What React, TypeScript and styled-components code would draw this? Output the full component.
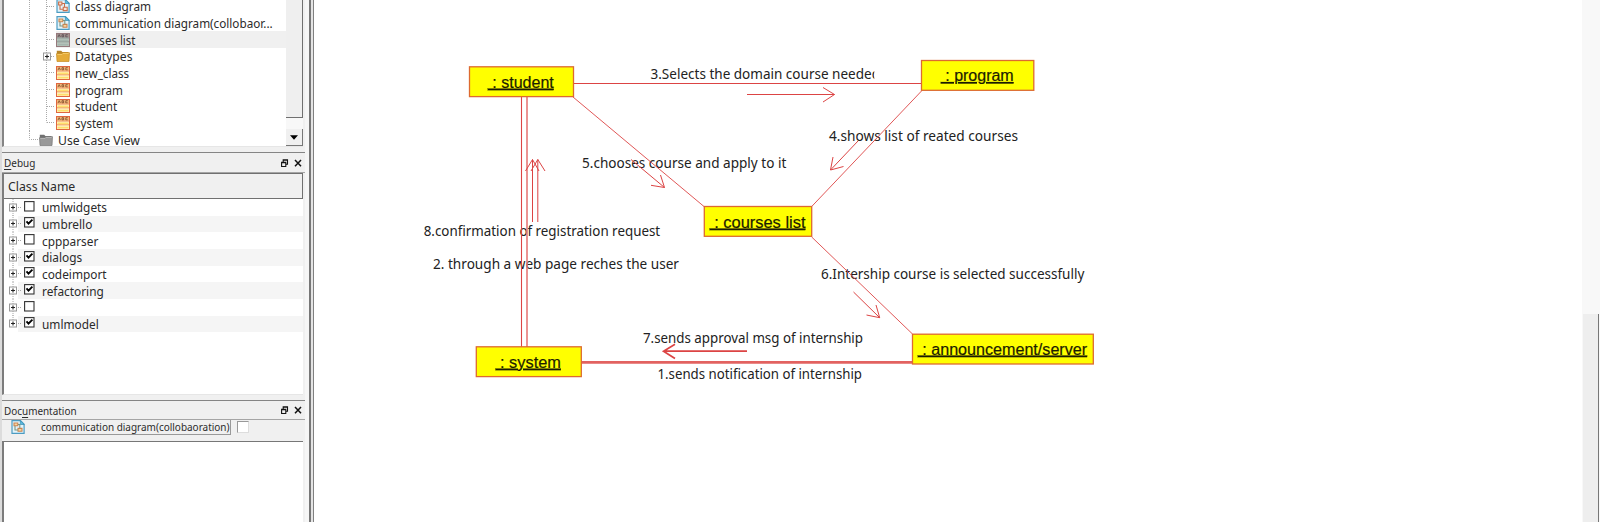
import React from "react";
import styled, { createGlobalStyle, css } from "styled-components";

const GlobalStyle = createGlobalStyle`
  * { box-sizing: border-box; }
  body { margin: 0; background: #fff; font-family: "Noto Sans", "Open Sans", sans-serif; color: #2b2b2b; overflow: hidden; }
`;

const Window = styled.div`
  display: flex;
  width: 1600px;
  height: 522px;
  overflow: hidden;
  background: #fff;
`;

const Sidebar = styled.aside`
  display: flex;
  flex-direction: column;
  width: 305px;
  height: 522px;
  flex: none;
  border-left: 2px solid #dcdcdc;
  background: #f0f0f0;
`;

const Splitter = styled.div`
  width: 10px;
  flex: none;
  background: linear-gradient(90deg, #f6f6f6 0 4px, #777 4px 6px, #e4e4e4 6px 8px, #808080 8px 9px, #fff 9px);
`;

const TreePane = styled.section`
  display: flex;
  height: 147px;
  flex: none;
  margin: 0 2px 0 0;
  border-left: 2px solid #858585;
  border-bottom: 1px solid #e6e6e6;
  background: #fff;
  overflow: hidden;
`;

const TreeRows = styled.div`
  flex: 1;
  margin-top: -2px;
  min-width: 0;
`;

const TreeRow = styled.div<{ $selected?: boolean; $level: number }>`
  display: flex;
  align-items: center;
  height: 16.67px;
  padding-left: ${(p) => (p.$level === 1 ? 25 : 37)}px;
  background: ${(p) => (p.$selected ? "linear-gradient(90deg, #fff 52px, #f0f0f0 52px)" : "none")};
`;

const NarrowText = styled.span<{ $scale?: number }>`
  display: inline-block;
  transform: scaleX(${(p) => p.$scale ?? 0.87});
  transform-origin: left center;
  white-space: pre;
`;

const TreeLabel = styled(NarrowText)`
  font-size: 13.4px;
  line-height: 16px;
`;

const BranchSvg = styled.svg`
  flex: none;
  display: block;
`;

const IconSvg = styled.svg`
  flex: none;
  display: block;
  margin-right: 5px;
`;

const ScrollColumn = styled.div`
  display: flex;
  flex-direction: column;
  width: 17px;
  flex: none;
  background: #f8f8f8;
`;

const ScrollThumb = styled.div`
  height: 118px;
  border-right: 1px solid #707070;
  border-bottom: 1px solid #707070;
  background: #efefef;
`;

const ScrollButton = styled.div`
  display: flex;
  align-items: center;
  justify-content: center;
  height: 17px;
  margin-top: 11px;
  border-right: 1px solid #777;
  border-bottom: 1px solid #777;
  background: #f0f0f0;
`;

const DockTitle = styled.header<{ $h: number }>`
  display: flex;
  align-items: center;
  justify-content: space-between;
  height: ${(p) => p.$h}px;
  flex: none;
  margin-top: 5px;
  padding: 1px 3px 0 2px;
  border-top: 1.5px solid #858585;
  border-bottom: 1px solid #a5a5a5;
  font-size: 11.6px;
  line-height: 16px;
`;

const Mnemonic = styled.span`
  text-decoration: underline;
  text-underline-offset: 1.5px;
`;

const DebugList = styled.section`
  display: flex;
  flex-direction: column;
  height: 222px;
  flex: none;
  margin: 0 2px 0 0;
  border-left: 2px solid #7c7c7c;
  border-bottom: 1px solid #e6e6e6;
  background: #fff;
`;

const ColumnHeader = styled.div`
  display: flex;
  align-items: center;
  height: 26px;
  flex: none;
  padding-left: 4px;
  border: 1px solid #707070;
  border-left: 0;
  background: #f0f0f0;
  font-size: 13.4px;
`;

const DebugRow = styled.div<{ $alt: boolean }>`
  display: flex;
  align-items: center;
  height: 16.67px;
  flex: none;
  padding-left: 5px;
  background: ${(p) => (p.$alt ? "linear-gradient(90deg, #fff 14px, #f5f5f5 14px)" : "none")};
`;

const CheckSvg = styled.svg`
  flex: none;
  margin: -2px 7px 0 2px;
`;

const DocBar = styled.div`
  display: flex;
  align-items: flex-start;
  height: 21px;
  flex: none;
  padding-left: 9px;
`;

const DocName = styled.div`
  height: 15px;
  width: 191px;
  flex: none;
  margin-left: 10px;
  padding-left: 1px;
  border-right: 1px solid #999;
  border-bottom: 1px solid #999;
  font-size: 11.4px;
  line-height: 14px;
  white-space: nowrap;
`;

const DocCheck = styled.div`
  width: 12px;
  height: 12px;
  margin: 1px 0 0 6px;
  border: 1px solid #999;
  border-right-color: #ddd;
  border-bottom-color: #ddd;
  background: #fff;
`;

const DocText = styled.div`
  flex: 1;
  margin-right: 2px;
  border-top: 1.5px solid #777;
  border-left: 2px solid #7c7c7c;
  background: #fff;
`;

const Canvas = styled.main`
  flex: 1;
  min-width: 0;
`;

const DiagramSvg = styled.svg`
  display: block;
`;

const Edge = styled.path<{ $tone?: string; $w?: number }>`
  fill: none;
  stroke: ${(p) => p.$tone ?? "#dc4444"};
  stroke-width: ${(p) => p.$w ?? 1};
`;

const NodeRect = styled.rect`
  fill: #ffff00;
  stroke: #dd6a30;
  stroke-width: 1.3;
`;

const nodeFont = css`
  font-family: "Liberation Sans", Arial, sans-serif;
  font-size: 16px;
`;

const NodeText = styled.text`
  ${nodeFont}
  fill: #1c1c00;
  stroke: #1c1c00;
  stroke-width: 0.2;
`;

const MessageText = styled.text`
  font-size: 13.5px;
  fill: #222;
`;

const CanvasScroll = styled.div`
  display: flex;
  flex-direction: column;
  width: 18px;
  flex: none;
  background: #f8f8f8;
`;

const CanvasThumb = styled.div`
  flex: 1;
  margin: 314px 1px 0 1px;
  border-right: 1px solid #777;
  background: #eee;
`;

type IconKind = "diagram" | "collab" | "class" | "classGrey" | "folder" | "folderGrey";

function TreeIcon({ kind }: { kind: IconKind }) {
  if (kind === "diagram" || kind === "collab") {
    return (
      <IconSvg width="14" height="14" viewBox="0 0 14 14">
        <path d="M1 .7h8.5l3.6 3.6v9H1z" fill="#e3f4fb" stroke="#4c9cc2" strokeWidth="1.2" />
        <path d="M9.3.6v3.9h3.9z" fill="#5ebbe0" stroke="#368eb3" strokeWidth=".7" />
        {kind === "diagram" ? (
          <g fill="#fbe3d5" stroke="#cb6f4c" strokeWidth="1.1">
            <path d="M2.6 3h3.3v3H2.6zM7.2 8.3h4v3.3h-4z" />
            <path d="M4 6v4.2h3.2M6 4.5h2.5v3.8" fill="none" />
          </g>
        ) : (
          <g fill="#f4d5a1" stroke="#cc8450" strokeWidth="1.1">
            <path d="M3 3h3.8v2.8H3zM7 8.4h4v2.9H7z" />
            <path d="M4 6v4h3M7 4.5h1.8v3.8" fill="none" stroke="#7d9480" />
          </g>
        )}
      </IconSvg>
    );
  }
  if (kind === "folder" || kind === "folderGrey") {
    const gold = kind === "folder";
    return (
      <IconSvg width="14" height="14" viewBox="0 0 14 14">
        <path d="M.8 3V1.8h4.4l1.2 1.3h6v3H.8z" fill={gold ? "#b9872b" : "#707070"} />
        <path d="M.5 4.7h5.2l1-1h6.8l-.5 8.8H1z" fill={gold ? "#e5ab38" : "#999"} stroke={gold ? "#c58c24" : "#777"} strokeWidth=".7" />
        <path d="M1.3 5.5H6l1-1h5.7" fill="none" stroke={gold ? "#f7cf70" : "#bbb"} strokeWidth=".8" />
      </IconSvg>
    );
  }
  const grey = kind === "classGrey";
  return (
    <IconSvg width="14" height="14" viewBox="0 0 14 14">
      <rect x=".5" y=".5" width="13" height="13" fill={grey ? "#b9c6bd" : "#fff3c4"} stroke={grey ? "#96797c" : "#e0673f"} strokeWidth="1" />
      <rect x="1" y="1" width="12" height="3.6" fill={grey ? "#a39390" : "#f0b878"} />
      <path d="M2 4l1.2-2.4L4.4 4M6 3.9V1.7h1.6v2.2zM11.8 1.7H9.8v2.2h2" fill="none" stroke={grey ? "#554b50" : "#7c4628"} strokeWidth=".8" />
      <path d="M1 5h12M1 8.8h12" stroke={grey ? "#87908c" : "#e8824e"} strokeWidth=".9" />
      <path d="M1.5 7.4h11M1.5 11.6h11" stroke={grey ? "#a5b5ae" : "#ffdf6c"} strokeWidth="1.6" />
    </IconSvg>
  );
}

interface TreeItem {
  label: string;
  icon: IconKind;
  selected?: boolean;
  expandable?: boolean;
  last?: boolean;
  scale?: number;
}

const treeItems: TreeItem[] = [
  { label: "class diagram", icon: "diagram", scale: 0.88 },
  { label: "communication diagram(collobaor...", icon: "collab", scale: 0.875 },
  { label: "courses list", icon: "classGrey", selected: true, scale: 0.86 },
  { label: "Datatypes", icon: "folder", expandable: true, scale: 0.905 },
  { label: "new_class", icon: "class" },
  { label: "program", icon: "class" },
  { label: "student", icon: "class" },
  { label: "system", icon: "class", last: true, scale: 0.86 },
];

function PlusBox() {
  return (
    <>
      <rect x="2.5" y="5" width="7" height="7" fill="#fff" stroke="#999" />
      <path d="M4 8.5h4M6 6.5v4" stroke="#222" strokeWidth="1.1" />
    </>
  );
}

function ModelTree() {
  return (
    <TreePane>
      <TreeRows>
        {treeItems.map((item) => (
          <TreeRow key={item.label} $level={2} $selected={item.selected}>
            <BranchSvg width="15" height="17" viewBox="0 0 15 17" overflow="visible">
              <path d={`M-11.5 0v17M5.5 0v${item.last ? 8.5 : 17}M6 8.5h7`} stroke="#aaa" strokeDasharray="1 1" fill="none" />
              {item.expandable && <PlusBox />}
            </BranchSvg>
            <TreeIcon kind={item.icon} />
            <TreeLabel $scale={item.scale}>{item.label}</TreeLabel>
          </TreeRow>
        ))}
        <TreeRow $level={1}>
          <BranchSvg width="10" height="17" viewBox="0 0 10 17">
            <path d="M.5 0v8.5h9" stroke="#aaa" strokeDasharray="1 1" fill="none" />
          </BranchSvg>
          <TreeIcon kind="folderGrey" />
          <TreeLabel $scale={0.91}>Use Case View</TreeLabel>
        </TreeRow>
      </TreeRows>
      <ScrollColumn>
        <ScrollThumb />
        <ScrollButton>
          <svg width="8" height="5" viewBox="0 0 8 5"><path d="M0 .3h8L4 4.7z" fill="#000" /></svg>
        </ScrollButton>
      </ScrollColumn>
    </TreePane>
  );
}

function DockButtons() {
  return (
    <svg width="21" height="9" viewBox="0 0 21 9">
      <path d="M2.2 3V.8h4.3v4.4H5M2 1.2h4.6M.6 3.3h4.2v4.2H.6zM.5 3.8h4.3" fill="none" stroke="#111" strokeWidth="1.1" />
      <path d="M14 1l6 6.3M20 1l-6 6.3" stroke="#111" strokeWidth="1.5" />
    </svg>
  );
}

const debugItems: [string, boolean][] = [
  ["umlwidgets", false],
  ["umbrello", true],
  ["cppparser", false],
  ["dialogs", true],
  ["codeimport", true],
  ["refactoring", true],
  ["", false],
  ["umlmodel", true],
];

function DebugPanel() {
  return (
    <DebugList>
      <ColumnHeader>
        <NarrowText $scale={0.915}>Class Name</NarrowText>
      </ColumnHeader>
      {debugItems.map(([name, checked], i) => (
        <DebugRow key={i} $alt={i % 2 === 1}>
          <BranchSvg width="13" height="17" viewBox="2 0 13 17">
            <path d={`M6 0v${i === 7 ? 8.5 : 17}M9 8.5h6`} stroke="#aaa" strokeDasharray="1 1" />
            <PlusBox />
          </BranchSvg>
          <CheckSvg width="11" height="11" viewBox="0 0 11 11">
            <rect x=".6" y=".6" width="9.4" height="9.4" fill="#fff" stroke="#333" strokeWidth="1.1" />
            {checked && <path d="M2.5 4.4l2 2.2L8.4 2.7" fill="none" stroke="#000" strokeWidth="1.9" />}
          </CheckSvg>
          <TreeLabel $scale={0.885}>{name}</TreeLabel>
        </DebugRow>
      ))}
    </DebugList>
  );
}

const nodes = [
  { x: 469.5, y: 66.8, w: 104, label: "student", tx: 487.8, tw: 66, ty: 87.6 },
  { x: 921.5, y: 60.5, w: 112.3, label: "program", tx: 940.8, tw: 72.9, ty: 81 },
  { x: 704.3, y: 206.5, w: 107.4, label: "courses list", tx: 709.6, tw: 95.9, ty: 227.5 },
  { x: 912.5, y: 334.2, w: 180.8, label: "announcement/server", tx: 917.8, tw: 169.3, ty: 354.5 },
  { x: 476.3, y: 346.8, w: 105, label: "system", tx: 495.5, tw: 65.4, ty: 367.6 },
];

const messages = [
  { x: 650.5, y: 79, w: 229.5, text: "3.Selects the domain course needed", clip: true },
  { x: 582, y: 168, w: 204.3, text: "5.chooses course and apply to it" },
  { x: 423.7, y: 236, w: 236.5, text: "8.confirmation of registration request" },
  { x: 433, y: 268.7, w: 246, text: "2. through a web page reches the user" },
  { x: 829, y: 141, w: 189, text: "4.shows list of reated courses" },
  { x: 821, y: 279, w: 263.3, text: "6.Intership course is selected successfully" },
  { x: 643, y: 343, w: 220, text: "7.sends approval msg of internship" },
  { x: 657.5, y: 379, w: 204.5, text: "1.sends notification of internship" },
];

function Diagram() {
  return (
    <DiagramSvg width="1267" height="522" viewBox="315 0 1267 522">
      <clipPath id="labelClip"><rect x="640" y="60" width="234.3" height="30" /></clipPath>
      {messages.map((m) => (
        <MessageText
          key={m.text}
          x={m.x}
          y={m.y}
          textLength={m.w}
          lengthAdjust="spacingAndGlyphs"
          clipPath={m.clip ? "url(#labelClip)" : undefined}
        >
          {m.text}
        </MessageText>
      ))}
      <Edge d="M573 83.5H921.5" $w={1.2} />
      <Edge d="M747 94.5H834.5M823 87.5L834.5 94.5L823 102" />
      <Edge d="M573 97L704 206.5M921.5 91L811.7 206.5M811.7 237L912.5 334" $w={0.9} />
      <Edge d="M631 159.5L664.5 187.5M660.5 175L664.5 187.5L651 185.3" />
      <Edge d="M858 141L830.5 170M833 157L830.5 170L843.5 166.5" />
      <Edge d="M853.5 292L879.7 317.7M876 305L879.7 317.7L866.5 315" />
      <Edge d="M521.5 97V347" $w={1.1} />
      <Edge d="M527 97V347" $w={1.6} $tone="#e67876" />
      <Edge d="M532.5 222V159.5M525.5 171L532.5 159.5L539 171M537.8 222V159.5M531 171L537.8 159.5L545 171" />
      <Edge d="M747 351.2H663.5M675 344.3L663.5 351.2L675 358.5" $w={1.7} />
      <Edge d="M581 362.4H912.5" $w={2.6} $tone="#e26260" />
      {nodes.map((n) => (
        <g key={n.label}>
          <NodeRect x={n.x} y={n.y} width={n.w} height={29.8} />
          <NodeText x={n.tx} y={n.ty} textLength={n.tw} lengthAdjust="spacingAndGlyphs" textDecoration="underline">
            {`\u00a0: ${n.label}`}
          </NodeText>
        </g>
      ))}
    </DiagramSvg>
  );
}

export default function App() {
  return (
    <Window>
      <GlobalStyle />
      <Sidebar>
        <ModelTree />
        <DockTitle $h={21}>
          <NarrowText $scale={0.86}><Mnemonic>D</Mnemonic>ebug</NarrowText>
          <DockButtons />
        </DockTitle>
        <DebugPanel />
        <DockTitle $h={20}>
          <NarrowText $scale={0.855}>Doc<Mnemonic>u</Mnemonic>mentation</NarrowText>
          <DockButtons />
        </DockTitle>
        <DocBar>
          <TreeIcon kind="collab" />
          <DocName>
            <NarrowText $scale={0.875}>communication diagram(collobaoration)</NarrowText>
          </DocName>
          <DocCheck />
        </DocBar>
        <DocText />
      </Sidebar>
      <Splitter />
      <Canvas>
        <Diagram />
      </Canvas>
      <CanvasScroll>
        <CanvasThumb />
      </CanvasScroll>
    </Window>
  );
}
